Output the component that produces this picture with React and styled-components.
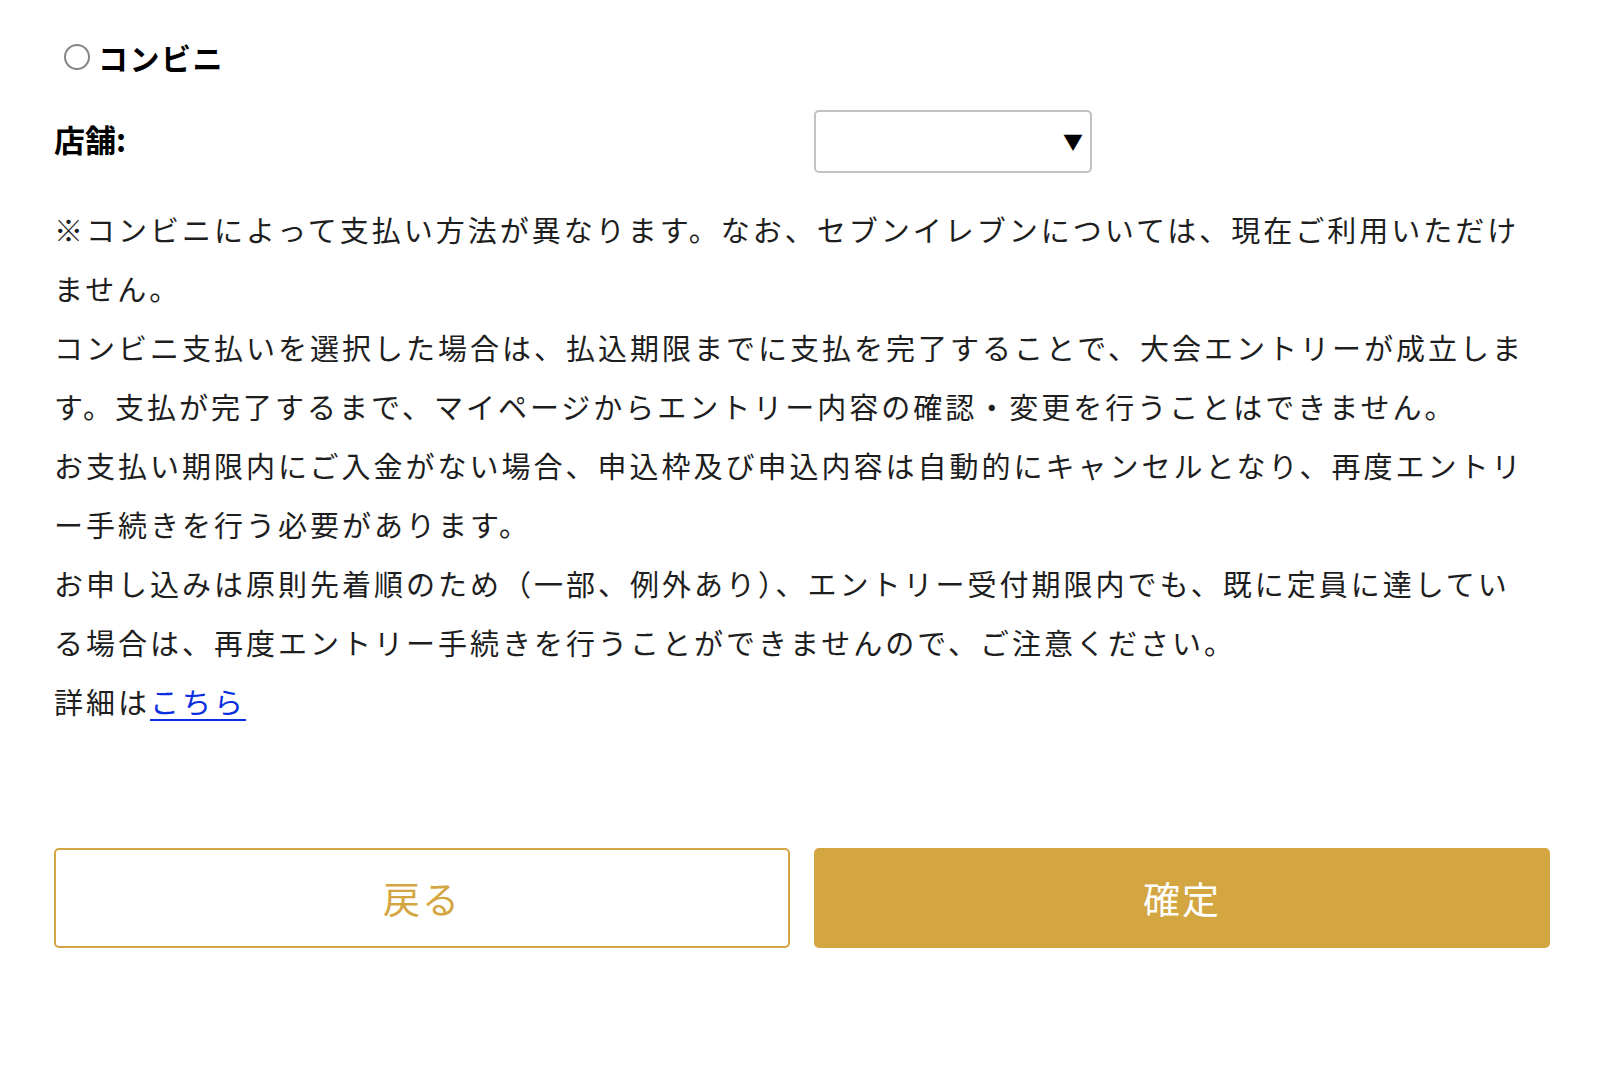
import React from "react";
import styled, { createGlobalStyle } from "styled-components";

const GlobalStyle = createGlobalStyle`
  html, body {
    margin: 0;
    padding: 0;
    background: #fff;
  }
  body {
    font-family: "Noto Sans CJK JP", "Noto Sans", sans-serif;
    color: #222;
  }
`;

const gold = "#d4a641";

const Page = styled.div`
  width: 1600px;
  min-height: 1072px;
  box-sizing: border-box;
  padding: 30px 50px 0 54px;
`;

const RadioRow = styled.label`
  display: flex;
  align-items: center;
  gap: 8px;
  height: 54px;
  padding-left: 10px;
  cursor: pointer;
`;

const RadioCircle = styled.span`
  width: 26px;
  height: 26px;
  box-sizing: border-box;
  border: 2px solid #858585;
  border-radius: 50%;
  background: #fff;
`;

const RadioLabel = styled.span`
  font-size: 30px;
  font-weight: 700;
  color: #000;
  letter-spacing: 1.5px;
`;

const Grid = styled.div`
  display: grid;
  grid-template-columns: 1fr 1fr;
  column-gap: 24px;
  margin-top: ${(p) => p.$top}px;
`;

const FieldLabel = styled.div`
  display: flex;
  align-items: center;
  padding-bottom: 6px;
  font-size: 31px;
  font-weight: 700;
  color: #000;
`;

const SelectWrap = styled.div`
  position: relative;
  width: 278px;
  height: 63px;
`;

const Select = styled.select`
  appearance: none;
  width: 100%;
  height: 100%;
  box-sizing: border-box;
  border: 2px solid #c2c2c2;
  border-radius: 5px;
  background: #fff;
  font-size: 24px;
  padding: 0 40px 0 12px;
`;

const Arrow = styled.span`
  position: absolute;
  right: 9px;
  top: 50%;
  transform: translateY(-52%);
  font-size: 20px;
  line-height: 1;
  color: #000;
  pointer-events: none;
`;

const Notes = styled.div`
  margin-top: 27px;
  padding-right: 14px;
  font-size: 29px;
  line-height: 59px;
  letter-spacing: 3px;
  color: #1e1e1e;
`;

const Line = styled.p`
  margin: 0;
`;

const TextLink = styled.a`
  color: #0a2ee0;
  text-decoration: underline;
  text-underline-offset: 5px;
`;

const Button = styled.button`
  height: 100px;
  box-sizing: border-box;
  border: 2px solid ${gold};
  border-radius: 5px;
  background: ${(p) => (p.$primary ? gold : "#fff")};
  color: ${(p) => (p.$primary ? "#fff" : gold)};
  font-family: "Noto Sans CJK JP", sans-serif;
  font-size: 37px;
  letter-spacing: 2px;
  cursor: pointer;
`;

export default function App() {
  return (
    <>
      <GlobalStyle />
      <Page>
        <RadioRow>
          <RadioCircle />
          <RadioLabel>コンビニ</RadioLabel>
        </RadioRow>

        <Grid $top={26}>
          <FieldLabel>店舗:</FieldLabel>
          <SelectWrap>
            <Select defaultValue="">
              <option value=""></option>
            </Select>
            <Arrow>▼</Arrow>
          </SelectWrap>
        </Grid>

        <Notes>
          <Line>
            ※コンビニによって支払い方法が異なります。なお、セブンイレブンについては、現在ご利用いただけません。
          </Line>
          <Line>
            コンビニ支払いを選択した場合は、払込期限までに支払を完了することで、大会エントリーが成立します。支払が完了するまで、マイページからエントリー内容の確認・変更を行うことはできません。
          </Line>
          <Line>
            お支払い期限内にご入金がない場合、申込枠及び申込内容は自動的にキャンセルとなり、再度エントリー手続きを行う必要があります。
          </Line>
          <Line>
            お申し込みは原則先着順のため（一部、例外あり）、エントリー受付期限内でも、既に定員に達している場合は、再度エントリー手続きを行うことができませんので、ご注意ください。
          </Line>
          <Line>
            詳細は<TextLink href="#">こちら</TextLink>
          </Line>
        </Notes>

        <Grid $top={117}>
          <Button>戻る</Button>
          <Button $primary>確定</Button>
        </Grid>
      </Page>
    </>
  );
}
